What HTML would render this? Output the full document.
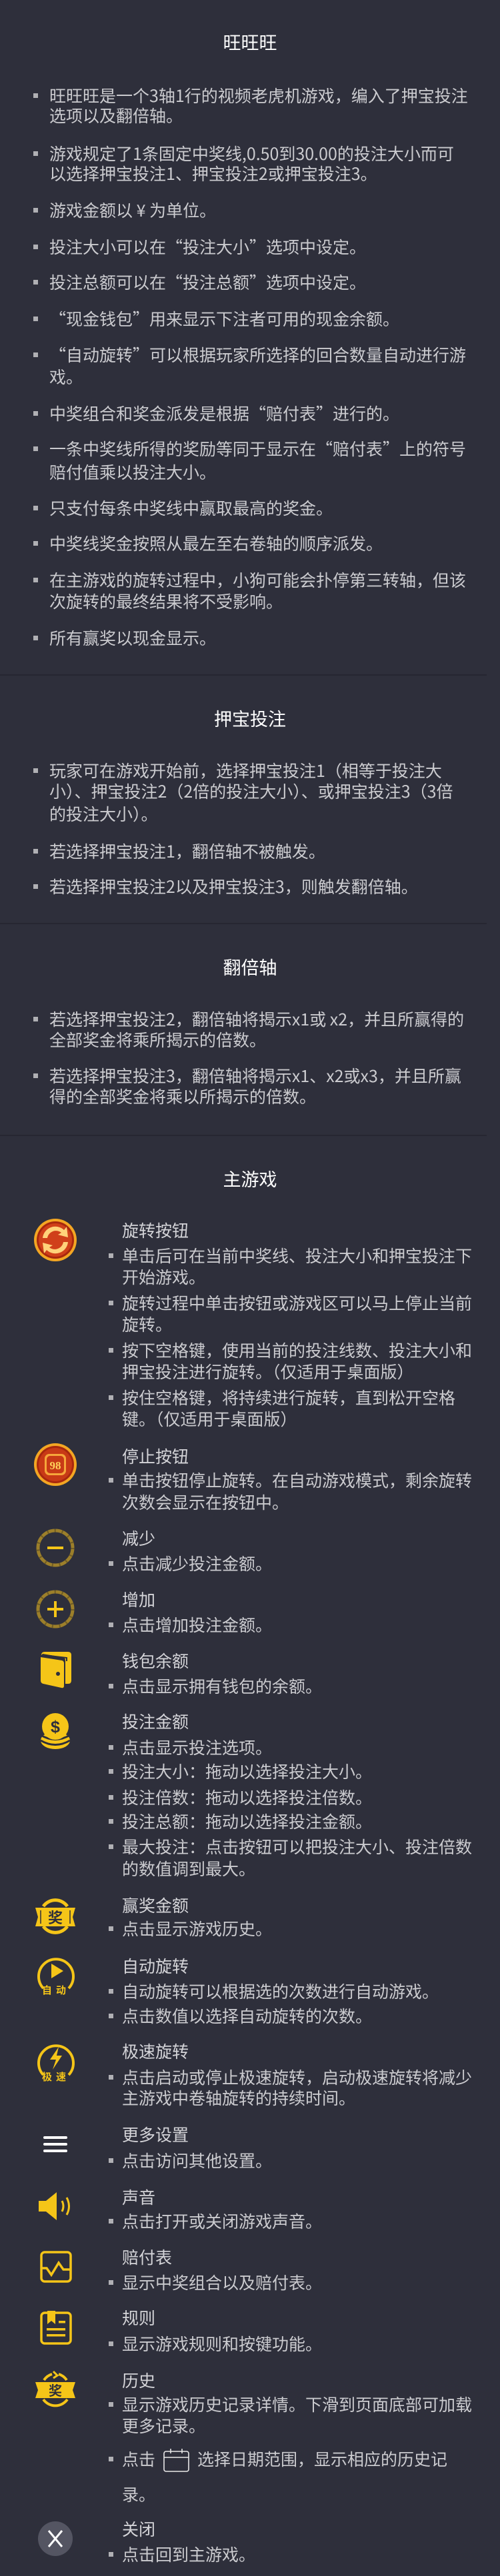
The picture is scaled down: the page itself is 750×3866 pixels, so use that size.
<!DOCTYPE html>
<html><head><meta charset="utf-8">
<style>
html,body{margin:0;padding:0;}
body{width:750px;height:3866px;background:#2e2f3b;position:relative;overflow:hidden;font-family:"Noto Sans CJK SC","Liberation Sans",sans-serif;color:#cbcbcf;font-size:25px;}
.l{position:absolute;line-height:32px;height:32px;white-space:nowrap;}
.s{left:74px;}
.m{left:183px;}
.b::before{content:"";position:absolute;width:7px;height:7px;background:#b0b0b4;top:13px;}
.s.b::before{left:-24px;}
.m.b::before{left:-20px;}
.t{position:absolute;left:0;width:750px;text-align:center;line-height:36px;font-size:27px;color:#fff;}
.hr{position:absolute;left:0;width:730px;height:2px;background:#262631;}
.h{color:#d4d4d8;}
svg.i{position:absolute;}
</style></head><body>

<div class="t" style="top:45px">旺旺旺</div>
<div class="l s b" style="top:127px">旺旺旺是一个3轴1行的视频老虎机游戏，编入了押宝投注</div>
<div class="l s" style="top:157px">选项以及翻倍轴。</div>
<div class="l s b" style="top:214px">游戏规定了1条固定中奖线,0.50到30.00的投注大小而可</div>
<div class="l s" style="top:244px">以选择押宝投注1、押宝投注2或押宝投注3。</div>
<div class="l s b" style="top:299px">游戏金额以 ¥ 为单位。</div>
<div class="l s b" style="top:354px">投注大小可以在“投注大小”选项中设定。</div>
<div class="l s b" style="top:407px">投注总额可以在“投注总额”选项中设定。</div>
<div class="l s b" style="top:462px">“现金钱包”用来显示下注者可用的现金余额。</div>
<div class="l s b" style="top:516px">“自动旋转”可以根据玩家所选择的回合数量自动进行游</div>
<div class="l s" style="top:549px">戏。</div>
<div class="l s b" style="top:604px">中奖组合和奖金派发是根据“赔付表”进行的。</div>
<div class="l s b" style="top:657px">一条中奖线所得的奖励等同于显示在“赔付表”上的符号</div>
<div class="l s" style="top:692px">赔付值乘以投注大小。</div>
<div class="l s b" style="top:746px">只支付每条中奖线中赢取最高的奖金。</div>
<div class="l s b" style="top:799px">中奖线奖金按照从最左至右卷轴的顺序派发。</div>
<div class="l s b" style="top:854px">在主游戏的旋转过程中，小狗可能会扑停第三转轴，但该</div>
<div class="l s" style="top:886px">次旋转的最终结果将不受影响。</div>
<div class="l s b" style="top:941px">所有赢奖以现金显示。</div>
<div class="hr" style="top:1012px"></div>

<div class="t" style="top:1060px">押宝投注</div>
<div class="l s b" style="top:1140px">玩家可在游戏开始前，选择押宝投注1（相等于投注大</div>
<div class="l s" style="top:1171px">小）、押宝投注2（2倍的投注大小）、或押宝投注3（3倍</div>
<div class="l s" style="top:1205px">的投注大小）。</div>
<div class="l s b" style="top:1261px">若选择押宝投注1，翻倍轴不被触发。</div>
<div class="l s b" style="top:1314px">若选择押宝投注2以及押宝投注3，则触发翻倍轴。</div>
<div class="hr" style="top:1385px"></div>

<div class="t" style="top:1433px">翻倍轴</div>
<div class="l s b" style="top:1513px">若选择押宝投注2，翻倍轴将揭示x1或 x2，并且所赢得的</div>
<div class="l s" style="top:1544px">全部奖金将乘所揭示的倍数。</div>
<div class="l s b" style="top:1598px">若选择押宝投注3，翻倍轴将揭示x1、x2或x3，并且所赢</div>
<div class="l s" style="top:1629px">得的全部奖金将乘以所揭示的倍数。</div>
<div class="hr" style="top:1703px"></div>

<div class="t" style="top:1751px">主游戏</div>

<svg class="i" style="left:50px;top:1828px" width="66" height="66" viewBox="0 0 66 66">
<circle cx="33" cy="33" r="32" fill="#f3a623"/><circle cx="33" cy="33" r="28" fill="#a8280e"/><circle cx="33" cy="33" r="25" fill="#d0401a"/>
<path d="M14 30 A19 19 0 0 1 46 18 L50 13 L52 29 L37 25 L42 22 A13 13 0 0 0 21 30 Z" fill="#ffd27a"/>
<path d="M52 36 A19 19 0 0 1 20 48 L16 53 L14 37 L29 41 L24 44 A13 13 0 0 0 45 36 Z" fill="#ffd27a"/>
</svg>
<div class="l m h" style="top:1830px">旋转按钮</div>
<div class="l m b" style="top:1868px">单击后可在当前中奖线、投注大小和押宝投注下</div>
<div class="l m" style="top:1900px">开始游戏。</div>
<div class="l m b" style="top:1939px">旋转过程中单击按钮或游戏区可以马上停止当前</div>
<div class="l m" style="top:1971px">旋转。</div>
<div class="l m b" style="top:2010px">按下空格键，使用当前的投注线数、投注大小和</div>
<div class="l m" style="top:2042px">押宝投注进行旋转。（仅适用于桌面版）</div>
<div class="l m b" style="top:2081px">按住空格键，将持续进行旋转，直到松开空格</div>
<div class="l m" style="top:2113px">键。（仅适用于桌面版）</div>

<svg class="i" style="left:50px;top:2165px" width="66" height="66" viewBox="0 0 66 66">
<circle cx="33" cy="33" r="32" fill="#f3a623"/><circle cx="33" cy="33" r="28" fill="#a8280e"/><circle cx="33" cy="33" r="25" fill="#c83a16"/>
<rect x="17" y="17" width="32" height="32" rx="7" fill="#f6a63a"/><rect x="20" y="20" width="26" height="26" rx="5" fill="#c83a16"/>
<text x="33" y="40" text-anchor="middle" font-family="Liberation Serif,serif" font-weight="bold" font-size="17" fill="#ffd35a">98</text>
</svg>
<div class="l m h" style="top:2169px">停止按钮</div>
<div class="l m b" style="top:2205px">单击按钮停止旋转。在自动游戏模式，剩余旋转</div>
<div class="l m" style="top:2238px">次数会显示在按钮中。</div>

<svg class="i" style="left:54px;top:2294px" width="58" height="58" viewBox="0 0 58 58">
<circle cx="29" cy="29" r="26" fill="none" stroke="#9c7f2a" stroke-width="5"/>
<circle cx="29" cy="29" r="26" fill="none" stroke="#6f5c26" stroke-width="5" stroke-dasharray="2 9"/>
<rect x="17" y="27" width="24" height="4" fill="#f5c518"/>
</svg>
<div class="l m h" style="top:2292px">减少</div>
<div class="l m b" style="top:2330px">点击减少投注金额。</div>

<svg class="i" style="left:54px;top:2386px" width="58" height="58" viewBox="0 0 58 58">
<circle cx="29" cy="29" r="26" fill="none" stroke="#9c7f2a" stroke-width="5"/>
<circle cx="29" cy="29" r="26" fill="none" stroke="#6f5c26" stroke-width="5" stroke-dasharray="2 9"/>
<rect x="17" y="27" width="24" height="4" fill="#f5c518"/><rect x="27" y="17" width="4" height="24" fill="#f5c518"/>
</svg>
<div class="l m h" style="top:2384px">增加</div>
<div class="l m b" style="top:2422px">点击增加投注金额。</div>

<svg class="i" style="left:60px;top:2478px" width="48" height="56" viewBox="0 0 48 56">
<path d="M2 6 Q2 1 7 1 L42 1 Q47 1 47 6 L47 44 Q47 49 42 49 L38 49 L38 14 Q38 10 34 9 L4 4 Z" fill="#f5c518"/>
<path d="M1 9 L33 14 Q36 15 36 18 L36 52 Q36 56 32 55 L5 49 Q1 48 1 44 Z" fill="#f5c518"/>
<path d="M6 6 L40 10 L40 15" stroke="#2e2f3b" stroke-width="2" fill="none"/>
<circle cx="27" cy="34" r="3" fill="#2e2f3b"/>
</svg>
<div class="l m h" style="top:2476px">钱包余额</div>
<div class="l m b" style="top:2514px">点击显示拥有钱包的余额。</div>

<svg class="i" style="left:60px;top:2570px" width="46" height="56" viewBox="0 0 46 56">
<ellipse cx="23" cy="42" rx="22" ry="13" fill="#f5c518"/>
<path d="M1 42 Q23 55 45 42" stroke="#2e2f3b" stroke-width="3" fill="none"/>
<path d="M1 34 Q23 47 45 34" stroke="#2e2f3b" stroke-width="3" fill="none"/>
<circle cx="23" cy="21" r="20" fill="#f5c518"/>
<text x="23" y="30" text-anchor="middle" font-family="Liberation Sans,sans-serif" font-weight="bold" font-size="25" fill="#2e2f3b">$</text>
</svg>
<div class="l m h" style="top:2567px">投注金额</div>
<div class="l m b" style="top:2606px">点击显示投注选项。</div>
<div class="l m b" style="top:2642px">投注大小：拖动以选择投注大小。</div>
<div class="l m b" style="top:2681px">投注倍数：拖动以选择投注倍数。</div>
<div class="l m b" style="top:2717px">投注总额：拖动以选择投注金额。</div>
<div class="l m b" style="top:2755px">最大投注：点击按钮可以把投注大小、投注倍数</div>
<div class="l m" style="top:2788px">的数值调到最大。</div>

<svg class="i" style="left:53px;top:2847px" width="60" height="58" viewBox="0 0 60 58">
<path d="M12 14 A22 22 0 0 1 48 14" stroke="#f5c518" stroke-width="5" fill="none"/>
<path d="M12 44 A22 22 0 0 0 48 44" stroke="#f5c518" stroke-width="5" fill="none"/>
<path d="M0 16 L60 16 L56 30 L60 44 L0 44 L4 30 Z" fill="#f5c518"/>
<path d="M8 20 L8 40 M52 20 L52 40" stroke="#2e2f3b" stroke-width="1.5"/>
<text x="30" y="39" text-anchor="middle" font-family="Noto Sans CJK SC,sans-serif" font-weight="bold" font-size="22" fill="#2e2f3b">奖</text>
</svg>
<div class="l m h" style="top:2843px">赢奖金额</div>
<div class="l m b" style="top:2878px">点击显示游戏历史。</div>

<svg class="i" style="left:55px;top:2932px" width="58" height="62" viewBox="0 0 58 62">
<path d="M10 52 A26 26 0 1 1 48 52" stroke="#f5c518" stroke-width="4" fill="none"/>
<path d="M22 15 L40 26 L22 37 Z" fill="#f5c518"/>
<text x="29" y="60" text-anchor="middle" font-family="Noto Sans CJK SC,sans-serif" font-weight="bold" font-size="15" letter-spacing="6" fill="#f5c518">自动</text>
</svg>
<div class="l m h" style="top:2934px">自动旋转</div>
<div class="l m b" style="top:2972px">自动旋转可以根据选的次数进行自动游戏。</div>
<div class="l m b" style="top:3009px">点击数值以选择自动旋转的次数。</div>

<svg class="i" style="left:55px;top:3062px" width="58" height="62" viewBox="0 0 58 62">
<path d="M10 52 A26 26 0 1 1 48 52" stroke="#f5c518" stroke-width="4" fill="none"/>
<path d="M33 10 L20 29 L29 29 L24 44 L38 23 L30 23 Z" fill="#f5c518"/>
<text x="29" y="60" text-anchor="middle" font-family="Noto Sans CJK SC,sans-serif" font-weight="bold" font-size="15" letter-spacing="6" fill="#f5c518">极速</text>
</svg>
<div class="l m h" style="top:3062px">极速旋转</div>
<div class="l m b" style="top:3101px">点击启动或停止极速旋转，启动极速旋转将减少</div>
<div class="l m" style="top:3132px">主游戏中卷轴旋转的持续时间。</div>

<svg class="i" style="left:65px;top:3203px" width="36" height="30" viewBox="0 0 36 30">
<rect x="0" y="3" width="36" height="4" rx="2" fill="#fff"/><rect x="0" y="13" width="36" height="4" rx="2" fill="#fff"/><rect x="0" y="23" width="36" height="4" rx="2" fill="#fff"/>
</svg>
<div class="l m h" style="top:3187px">更多设置</div>
<div class="l m b" style="top:3226px">点击访问其他设置。</div>

<svg class="i" style="left:57px;top:3288px" width="54" height="46" viewBox="0 0 54 46">
<path d="M1 15 L12 15 L28 2 L28 44 L12 31 L1 31 Z" fill="#f5c518"/>
<path d="M36 15 Q40 23 36 31" stroke="#f5c518" stroke-width="3" fill="none"/>
<path d="M43 10 Q50 23 43 36" stroke="#f5c518" stroke-width="3" fill="none"/>
</svg>
<div class="l m h" style="top:3281px">声音</div>
<div class="l m b" style="top:3317px">点击打开或关闭游戏声音。</div>

<svg class="i" style="left:60px;top:3378px" width="48" height="48" viewBox="0 0 48 48">
<rect x="2" y="2" width="44" height="44" rx="5" fill="none" stroke="#f5c518" stroke-width="3.5"/>
<path d="M3 26 L10 26 L17 36 L28 18 L35 28 L45 28" stroke="#f5c518" stroke-width="3.5" fill="none"/>
</svg>
<div class="l m h" style="top:3371px">赔付表</div>
<div class="l m b" style="top:3409px">显示中奖组合以及赔付表。</div>

<svg class="i" style="left:60px;top:3466px" width="48" height="54" viewBox="0 0 48 54">
<rect x="2" y="5" width="44" height="46" rx="5" fill="none" stroke="#f5c518" stroke-width="3.5"/>
<path d="M11 2 L23 2 L23 22 L17 17 L11 22 Z" fill="#f5c518"/>
<rect x="28" y="17" width="10" height="3.5" fill="#f5c518"/>
<rect x="10" y="28" width="28" height="3.5" fill="#f5c518"/>
<rect x="10" y="37" width="28" height="3.5" fill="#f5c518"/>
</svg>
<div class="l m h" style="top:3462px">规则</div>
<div class="l m b" style="top:3501px">显示游戏规则和按键功能。</div>

<svg class="i" style="left:53px;top:3557px" width="60" height="58" viewBox="0 0 60 58">
<path d="M13 15 A22 22 0 0 1 25 6" stroke="#f5c518" stroke-width="4" fill="none"/>
<path d="M35 6 A22 22 0 0 1 47 15" stroke="#f5c518" stroke-width="4" fill="none"/>
<path d="M27 2 L33 8 L27 12" stroke="#f5c518" stroke-width="3" fill="none"/>
<path d="M12 44 A22 22 0 0 0 48 44" stroke="#f5c518" stroke-width="4" fill="none"/>
<path d="M0 18 L60 18 L56 30 L60 42 L0 42 L4 30 Z" fill="#f5c518"/>
<text x="30" y="38" text-anchor="middle" font-family="Noto Sans CJK SC,sans-serif" font-weight="bold" font-size="20" fill="#2e2f3b">奖</text>
</svg>
<div class="l m h" style="top:3556px">历史</div>
<div class="l m b" style="top:3592px">显示游戏历史记录详情。下滑到页面底部可加载</div>
<div class="l m" style="top:3624px">更多记录。</div>
<div class="l m b" style="top:3674px">点击</div>
<svg class="i" style="left:245px;top:3674px" width="39" height="36" viewBox="0 0 39 36">
<rect x="1" y="5" width="37" height="30" rx="3" fill="none" stroke="#e8e8e8" stroke-width="1.6"/>
<line x1="1" y1="14" x2="38" y2="14" stroke="#e8e8e8" stroke-width="1.6"/>
<line x1="11" y1="1" x2="11" y2="8" stroke="#e8e8e8" stroke-width="1.6"/>
<line x1="28" y1="1" x2="28" y2="8" stroke="#e8e8e8" stroke-width="1.6"/>
</svg>
<div class="l" style="left:296px;top:3674px">选择日期范围，显示相应的历史记</div>
<div class="l m" style="top:3727px">录。</div>

<svg class="i" style="left:57px;top:3784px" width="52" height="52" viewBox="0 0 52 52">
<circle cx="26" cy="26" r="26" fill="#545562"/>
<path d="M16 14 L36 38 M36 14 L16 38" stroke="#fff" stroke-width="3"/>
</svg>
<div class="l m h" style="top:3779px">关闭</div>
<div class="l m b" style="top:3817px">点击回到主游戏。</div>

</body></html>
